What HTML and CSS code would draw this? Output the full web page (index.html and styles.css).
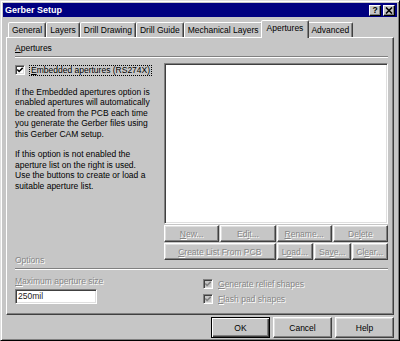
FILE: index.html
```html
<!DOCTYPE html>
<html>
<head>
<meta charset="utf-8">
<link rel="stylesheet" href="styles.css">
</head>
<body>
<div class="window">
  <div class="titlebar">
    <span class="title">Gerber Setup</span>
    <div class="tbtns">
      <span class="tbtn">?</span>
      <span class="tbtn"><svg width="8" height="7" viewBox="0 0 8 7"><path d="M1 0.5 L7 6.5 M7 0.5 L1 6.5" stroke="#000" stroke-width="1.6" fill="none"/></svg></span>
    </div>
  </div>
  <div class="tabs">
    <div class="tab">General</div>
    <div class="tab">Layers</div>
    <div class="tab">Drill Drawing</div>
    <div class="tab">Drill Guide</div>
    <div class="tab">Mechanical Layers</div>
    <div class="tab sel">Apertures</div>
    <div class="tab">Advanced</div>
  </div>
  <div class="panel">
    <div class="group-label"><u>A</u>pertures</div>
    <div class="etch"></div>
    <div class="top">
      <div class="left">
        <div class="chk">
          <span class="cb"><svg width="8" height="8" viewBox="0 0 8 8"><path d="M1.3 3.6 L3.1 5.5 L6.7 1.9" stroke="#000" stroke-width="1.5" fill="none"/></svg></span>
          <span class="focus"><u>E</u>mbedded apertures (RS274X)</span>
        </div>
        <p class="p1">If the Embedded apertures option is<br>enabled apertures will automatically<br>be created from the PCB each time<br>you generate the Gerber files using<br>this Gerber CAM setup.</p>
        <p class="p2">If this option is not enabled the<br>aperture list on the right is used.<br>Use the buttons to create or load a<br>suitable aperture list.</p>
        <div class="options dis">Options</div>
      </div>
      <div class="right">
        <div class="listbox sunken"></div>
        <div class="btngrid">
          <div class="btn dis span3"><span><u>N</u>ew...</span></div>
          <div class="btn dis span3"><span>Ed<u>i</u>t...</span></div>
          <div class="btn dis span3"><span><u>R</u>ename...</span></div>
          <div class="btn dis span3"><span>De<u>l</u>ete</span></div>
          <div class="btn dis span6"><span><u>C</u>reate List From PCB</span></div>
          <div class="btn dis span2"><span>L<u>o</u>ad...</span></div>
          <div class="btn dis span2"><span>Sa<u>v</u>e...</span></div>
          <div class="btn dis span2"><span>Cl<u>e</u>ar...</span></div>
        </div>
      </div>
    </div>
    <div class="etch etch2"></div>
    <div class="opts">
      <div class="opts-left">
        <div class="field-label dis"><u>M</u>aximum aperture size</div>
        <div class="input sunken">250mil</div>
      </div>
      <div class="opts-right">
        <div class="chk2">
          <span class="cb cb-dis"><svg width="8" height="8" viewBox="0 0 8 8"><path d="M1.3 3.6 L3.1 5.5 L6.7 1.9" stroke="#808080" stroke-width="1.5" fill="none"/></svg></span>
          <span class="dis"><u>G</u>enerate relief shapes</span>
        </div>
        <div class="chk2">
          <span class="cb cb-dis"><svg width="8" height="8" viewBox="0 0 8 8"><path d="M1.3 3.6 L3.1 5.5 L6.7 1.9" stroke="#808080" stroke-width="1.5" fill="none"/></svg></span>
          <span class="dis"><u>F</u>lash pad shapes</span>
        </div>
      </div>
    </div>
  </div>
  <div class="footer">
    <div class="btn big default">OK</div>
    <div class="btn big">Cancel</div>
    <div class="btn big">Help</div>
  </div>
</div>
</body>
</html>
```

FILE: styles.css
```css
* { box-sizing: border-box; }
html, body { margin: 0; padding: 0; }
body {
  width: 400px;
  height: 341px;
  overflow: hidden;
  font-family: "Liberation Sans", Arial, sans-serif;
  font-size: 8.5px;
  color: #000;
  background: #c6c6c6;
}
u { text-decoration: underline; text-underline-offset: 1px; }

.window {
  width: 400px;
  height: 341px;
  background: #c6c6c6;
  border: 1px solid;
  border-color: #dfdfdf #000 #000 #dfdfdf;
  box-shadow: inset 1px 1px #fff, inset -1px -1px #808080;
  padding: 2px;
  display: flex;
  flex-direction: column;
}

.titlebar {
  flex: none;
  height: 14px;
  background: #000080;
  display: flex;
  align-items: center;
  justify-content: space-between;
  padding: 0 2px;
}
.title { color: #fff; font-weight: bold; font-size: 9px; }
.tbtns { display: flex; gap: 2px; }
.tbtn {
  width: 12px;
  height: 11px;
  background: #c6c6c6;
  border: 1px solid;
  border-color: #fff #000 #000 #fff;
  box-shadow: inset -1px -1px #808080;
  display: flex;
  align-items: center;
  justify-content: center;
  font-weight: bold;
  font-size: 8.5px;
  line-height: 1;
}

.tabs {
  flex: none;
  height: 17px;
  margin-top: 3px;
  display: flex;
  align-items: flex-end;
  padding-left: 5px;
  position: relative;
  z-index: 1;
}
.tab {
  height: 15px;
  padding: 0 3px;
  border: 1px solid;
  border-bottom: none;
  border-color: #fff #404040 transparent #fff;
  border-radius: 2px 2px 0 0;
  box-shadow: inset -1px 0 #808080;
  line-height: 14px;
  white-space: nowrap;
  background: #c6c6c6;
}
.tab.sel {
  height: 18px;
  margin: 0 -2px -1px;
  padding: 0 5px;
  line-height: 15px;
  position: relative;
  z-index: 2;
}

.panel {
  flex: none;
  height: 278px;
  margin: 0 3px;
  border: 1px solid;
  border-color: #fff #404040 #404040 #fff;
  box-shadow: inset -1px -1px #808080;
  padding: 0 5px 0 8px;
}
.group-label { margin-top: 5px; height: 11px; line-height: 11px; }
.etch {
  height: 2px;
  margin-top: 2px;
  border-top: 1px solid #808080;
  border-bottom: 1px solid #fff;
}
.etch2 { margin-top: 8px; }

.top {
  margin-top: 5px;
  display: grid;
  grid-template-columns: 1fr 224px;
}
.left {
  display: flex;
  flex-direction: column;
  margin-bottom: -5px;
}
.chk {
  height: 12px;
  margin-top: 1px;
  display: flex;
  align-items: center;
  gap: 4px;
  white-space: nowrap;
}
.cb {
  flex: none;
  width: 10px;
  height: 10px;
  background: #fff;
  border: 1px solid;
  border-color: #808080 #fff #fff #808080;
  box-shadow: inset 1px 1px #404040, inset -1px -1px #dfdfdf;
  display: flex;
  align-items: center;
  justify-content: center;
}
.cb svg { display: block; }
.cb-dis { background: #c6c6c6; }
.focus {
  border: 1px dotted #000;
  padding: 0 1px;
  line-height: 9px;
}
.p1, .p2 {
  margin: 0;
  line-height: 10.4px;
  white-space: nowrap;
}
.p1 { margin-top: 11px; }
.p2 { margin-top: 10.4px; }
.options { margin-top: auto; line-height: 10px; }

.dis { color: #868686; text-shadow: 1px 1px 0 #fff; }

.sunken {
  border: 1px solid;
  border-color: #808080 #fff #fff #808080;
  box-shadow: inset 1px 1px #404040, inset -1px -1px #dfdfdf;
}
.listbox { height: 161px; background: #fff; }
.btngrid {
  margin-top: 1px;
  display: grid;
  grid-template-columns: repeat(12, 1fr);
  grid-auto-rows: 17px;
  gap: 1px;
}
.span3 { grid-column: span 3; }
.span6 { grid-column: span 6; }
.span2 { grid-column: span 2; }

.btn {
  background: #c6c6c6;
  border: 1px solid;
  border-color: #fff #404040 #404040 #fff;
  box-shadow: inset -1px -1px #808080, inset 1px 1px #dfdfdf;
  display: flex;
  align-items: center;
  justify-content: center;
  white-space: nowrap;
}

.opts {
  display: grid;
  grid-template-columns: 188px 1fr;
}
.field-label { margin-top: 6px; line-height: 10px; white-space: nowrap; }
.input {
  margin-top: 3px;
  width: 82px;
  height: 15px;
  background: #fff;
  color: #222;
  padding-left: 2px;
  line-height: 13px;
}
.opts-right { margin-top: 6px; }
.chk2 {
  height: 15px;
  display: flex;
  align-items: center;
  gap: 5px;
  white-space: nowrap;
}

.footer {
  flex: none;
  margin-top: 2px;
  height: 21px;
  display: flex;
  justify-content: flex-end;
  gap: 3px;
  padding-right: 3px;
}
.btn.big { width: 59px; height: 21px; }
.btn.default {
  border-color: #000;
  box-shadow: inset 1px 1px #fff, inset -1px -1px #404040, inset -2px -2px #808080;
}
```
